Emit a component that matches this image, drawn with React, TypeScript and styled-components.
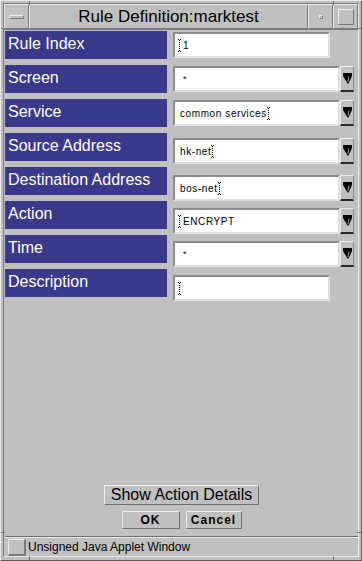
import styled, { createGlobalStyle } from "styled-components";

const Global = createGlobalStyle`
  html, body {
    margin: 0;
    padding: 0;
    background: #c0c0c0;
  }
  * {
    box-sizing: border-box;
  }
`;

const Window = styled.div`
  position: relative;
  width: 362px;
  height: 561px;
  background: #c0c0c0;
  border-top: 1px solid #e8e8e8;
  border-left: 1px solid #e8e8e8;
  border-right: 1px solid #5c5c5c;
  border-bottom: 1px solid #5c5c5c;
  padding: 2px 2px 3px 2px;
  display: flex;
  font-family: "Liberation Sans", Arial, sans-serif;
`;

// little resize-corner ticks on the motif frame
const Tick = styled.div<{ $v?: boolean }>`
  position: absolute;
  background: #7a7a7a;
  width: ${(p) => (p.$v ? "1px" : "4px")};
  height: ${(p) => (p.$v ? "4px" : "1px")};
`;

const Inner = styled.div`
  flex: 1;
  display: flex;
  flex-direction: column;
  border-top: 1px solid #7a7a7a;
  border-left: 1px solid #7a7a7a;
  border-right: 1px solid #eaeaea;
  border-bottom: 1px solid #eaeaea;
`;

const TitleBar = styled.div`
  display: flex;
  height: 25px;
`;

const FrameButton = styled.div<{ $w?: number }>`
  width: ${(p) => p.$w ?? 25}px;
  flex: ${(p) => (p.$w ? "none" : "1")};
  display: flex;
  align-items: center;
  justify-content: center;
  border-top: 1px solid #ececec;
  border-left: 1px solid #ececec;
  border-right: 1px solid #7a7a7a;
  border-bottom: 1px solid #7a7a7a;
`;

const Title = styled(FrameButton)`
  font-size: 17px;
  color: #000;
  padding-top: 1px;
`;

const MenuBar = styled.div`
  width: 15px;
  height: 4px;
  border-top: 1px solid #ececec;
  border-left: 1px solid #ececec;
  border-right: 1px solid #7a7a7a;
  border-bottom: 1px solid #7a7a7a;
`;

const MinDot = styled.div`
  width: 4px;
  height: 4px;
  border-top: 1px solid #ececec;
  border-left: 1px solid #ececec;
  border-right: 1px solid #7a7a7a;
  border-bottom: 1px solid #7a7a7a;
`;

const MaxBox = styled.div`
  width: 16px;
  height: 16px;
  border-top: 1px solid #ececec;
  border-left: 1px solid #ececec;
  border-right: 1px solid #7a7a7a;
  border-bottom: 1px solid #7a7a7a;
`;

const Client = styled.div`
  flex: 1;
  display: flex;
  flex-direction: column;
  border-top: 1px solid #7a7a7a;
  padding: 1px 0 0 1px;
`;

const Form = styled.div`
  display: flex;
  flex-direction: column;
  gap: 6px;
`;

const Row = styled.div`
  display: flex;
  align-items: flex-start;
  height: 28px;
`;

const Label = styled.div`
  width: 162px;
  height: 28px;
  background: #3a3a8c;
  color: #fff;
  font-size: 16px;
  padding: 0 0 3px 3px;
  margin-right: 6px;
  white-space: nowrap;
  display: flex;
  align-items: flex-start;
  line-height: 26px;
`;

const FieldGroup = styled.div<{ $off: number }>`
  display: flex;
  margin-top: ${(p) => p.$off}px;
`;

const Field = styled.div<{ $w: number }>`
  width: ${(p) => p.$w}px;
  height: 26px;
  background: #fff;
  border-top: 2px solid #8c8c8c;
  border-left: 2px solid #8c8c8c;
  border-right: 2px solid #e0e0e0;
  border-bottom: 2px solid #e0e0e0;
  display: flex;
  align-items: center;
  padding-left: 3px;
  font-size: 10px;
  letter-spacing: 0.6px;
  color: #000;
`;

const Value = styled.span<{ $star?: boolean }>`
  margin-left: ${(p) => (p.$star ? "5px" : "2px")};
  font-size: ${(p) => (p.$star ? "9px" : "10px")};
`;

const Caret = styled.span`
  display: inline-block;
  width: 3px;
  height: 13px;
  border-top: 1px dotted #000;
  border-bottom: 1px dotted #000;
  background: repeating-linear-gradient(
    to bottom,
    #000 0 1px,
    transparent 1px 2px
  );
  background-size: 1px 100%;
  background-position: 1px 0;
  background-repeat: no-repeat;
`;

const DropButton = styled.div`
  width: 14px;
  height: 26px;
  background: #c0c0c0;
  border-top: 1px solid #ececec;
  border-left: 1px solid #ececec;
  border-right: 1px solid #8a8a8a;
  border-bottom: 2px solid #2a2a2a;
  display: flex;
  align-items: center;
  justify-content: center;
`;

const Spacer = styled.div`
  flex: 1;
`;

const Actions = styled.div`
  display: flex;
  flex-direction: column;
  align-items: center;
  gap: 6px;
  padding-bottom: 7px;
`;

const RaisedButton = styled.div`
  display: flex;
  align-items: center;
  justify-content: center;
  background: #c0c0c0;
  border-top: 1px solid #ececec;
  border-left: 1px solid #ececec;
  border-right: 1px solid #6e6e6e;
  border-bottom: 1px solid #6e6e6e;
  color: #000;
`;

const DetailsButton = styled(RaisedButton)`
  width: 155px;
  height: 20px;
  font-size: 16px;
`;

const ButtonRow = styled.div`
  display: flex;
  gap: 6px;
`;

const SmallButton = styled(RaisedButton)<{ $w: number }>`
  width: ${(p) => p.$w}px;
  height: 18px;
  font-size: 12px;
  font-weight: bold;
  letter-spacing: 1px;
`;

const StatusBar = styled.div`
  display: flex;
  align-items: center;
  height: 20px;
  border-top: 1px solid #6e6e6e;
  box-shadow: inset 0 1px 0 #ececec;
  padding: 1px 0 0 3px;
  font-size: 12px;
  color: #000;
`;

const StatusIcon = styled.div`
  width: 18px;
  height: 17px;
  margin-right: 2px;
  border-top: 1px solid #ececec;
  border-left: 1px solid #ececec;
  border-right: 2px solid #7a7a7a;
  border-bottom: 2px solid #7a7a7a;
`;

const Arrow = () => (
  <svg width="9" height="11" viewBox="0 0 9 11">
    <path d="M0 0H9V3L5.5 10.5H4.5L0 3Z" fill="#000" />
    <path d="M6 3.5L5 9" stroke="#9a9a9a" strokeWidth="1" />
  </svg>
);

type RowData = {
  label: string;
  value?: string;
  star?: boolean;
  caret?: "before" | "after";
  combo: boolean;
  off: number;
};

const rows: RowData[] = [
  { label: "Rule Index", value: "1", caret: "before", combo: false, off: 1 },
  { label: "Screen", value: "*", star: true, combo: true, off: 1 },
  { label: "Service", value: "common services", caret: "after", combo: true, off: 1 },
  { label: "Source Address", value: "hk-net", caret: "after", combo: true, off: 5 },
  { label: "Destination Address", value: "bos-net", caret: "after", combo: true, off: 8 },
  { label: "Action", value: "ENCRYPT", caret: "before", combo: true, off: 7 },
  { label: "Time", value: "*", star: true, combo: true, off: 6 },
  { label: "Description", caret: "before", combo: false, off: 6 },
];

export default function App() {
  return (
    <Window>
      <Global />
      <Tick $v style={{ left: 28, top: 0 }} />
      <Tick style={{ left: 0, top: 27 }} />
      <Tick $v style={{ left: 332, top: 0 }} />
      <Tick style={{ right: 0, top: 27 }} />
      <Tick $v style={{ left: 28, bottom: 0 }} />
      <Tick style={{ left: 0, bottom: 27 }} />
      <Tick $v style={{ left: 332, bottom: 0 }} />
      <Tick style={{ right: 0, bottom: 27 }} />
      <Inner>
        <TitleBar>
          <FrameButton $w={25}>
            <MenuBar />
          </FrameButton>
          <Title>Rule Definition:marktest</Title>
          <FrameButton $w={25}>
            <MinDot />
          </FrameButton>
          <FrameButton $w={25}>
            <MaxBox />
          </FrameButton>
        </TitleBar>
        <Client>
          <Form>
            {rows.map((r) => (
              <Row key={r.label}>
                <Label>{r.label}</Label>
                <FieldGroup $off={r.off}>
                  <Field $w={r.combo ? 167 : 157}>
                    {r.caret === "before" && <Caret />}
                    {r.value && <Value $star={r.star}>{r.value}</Value>}
                    {r.caret === "after" && <Caret />}
                  </Field>
                  {r.combo && (
                    <DropButton>
                      <Arrow />
                    </DropButton>
                  )}
                </FieldGroup>
              </Row>
            ))}
          </Form>
          <Spacer />
          <Actions>
            <DetailsButton>Show Action Details</DetailsButton>
            <ButtonRow>
              <SmallButton $w={58}>OK</SmallButton>
              <SmallButton $w={56}>Cancel</SmallButton>
            </ButtonRow>
          </Actions>
          <StatusBar>
            <StatusIcon />
            Unsigned Java Applet Window
          </StatusBar>
        </Client>
      </Inner>
    </Window>
  );
}
